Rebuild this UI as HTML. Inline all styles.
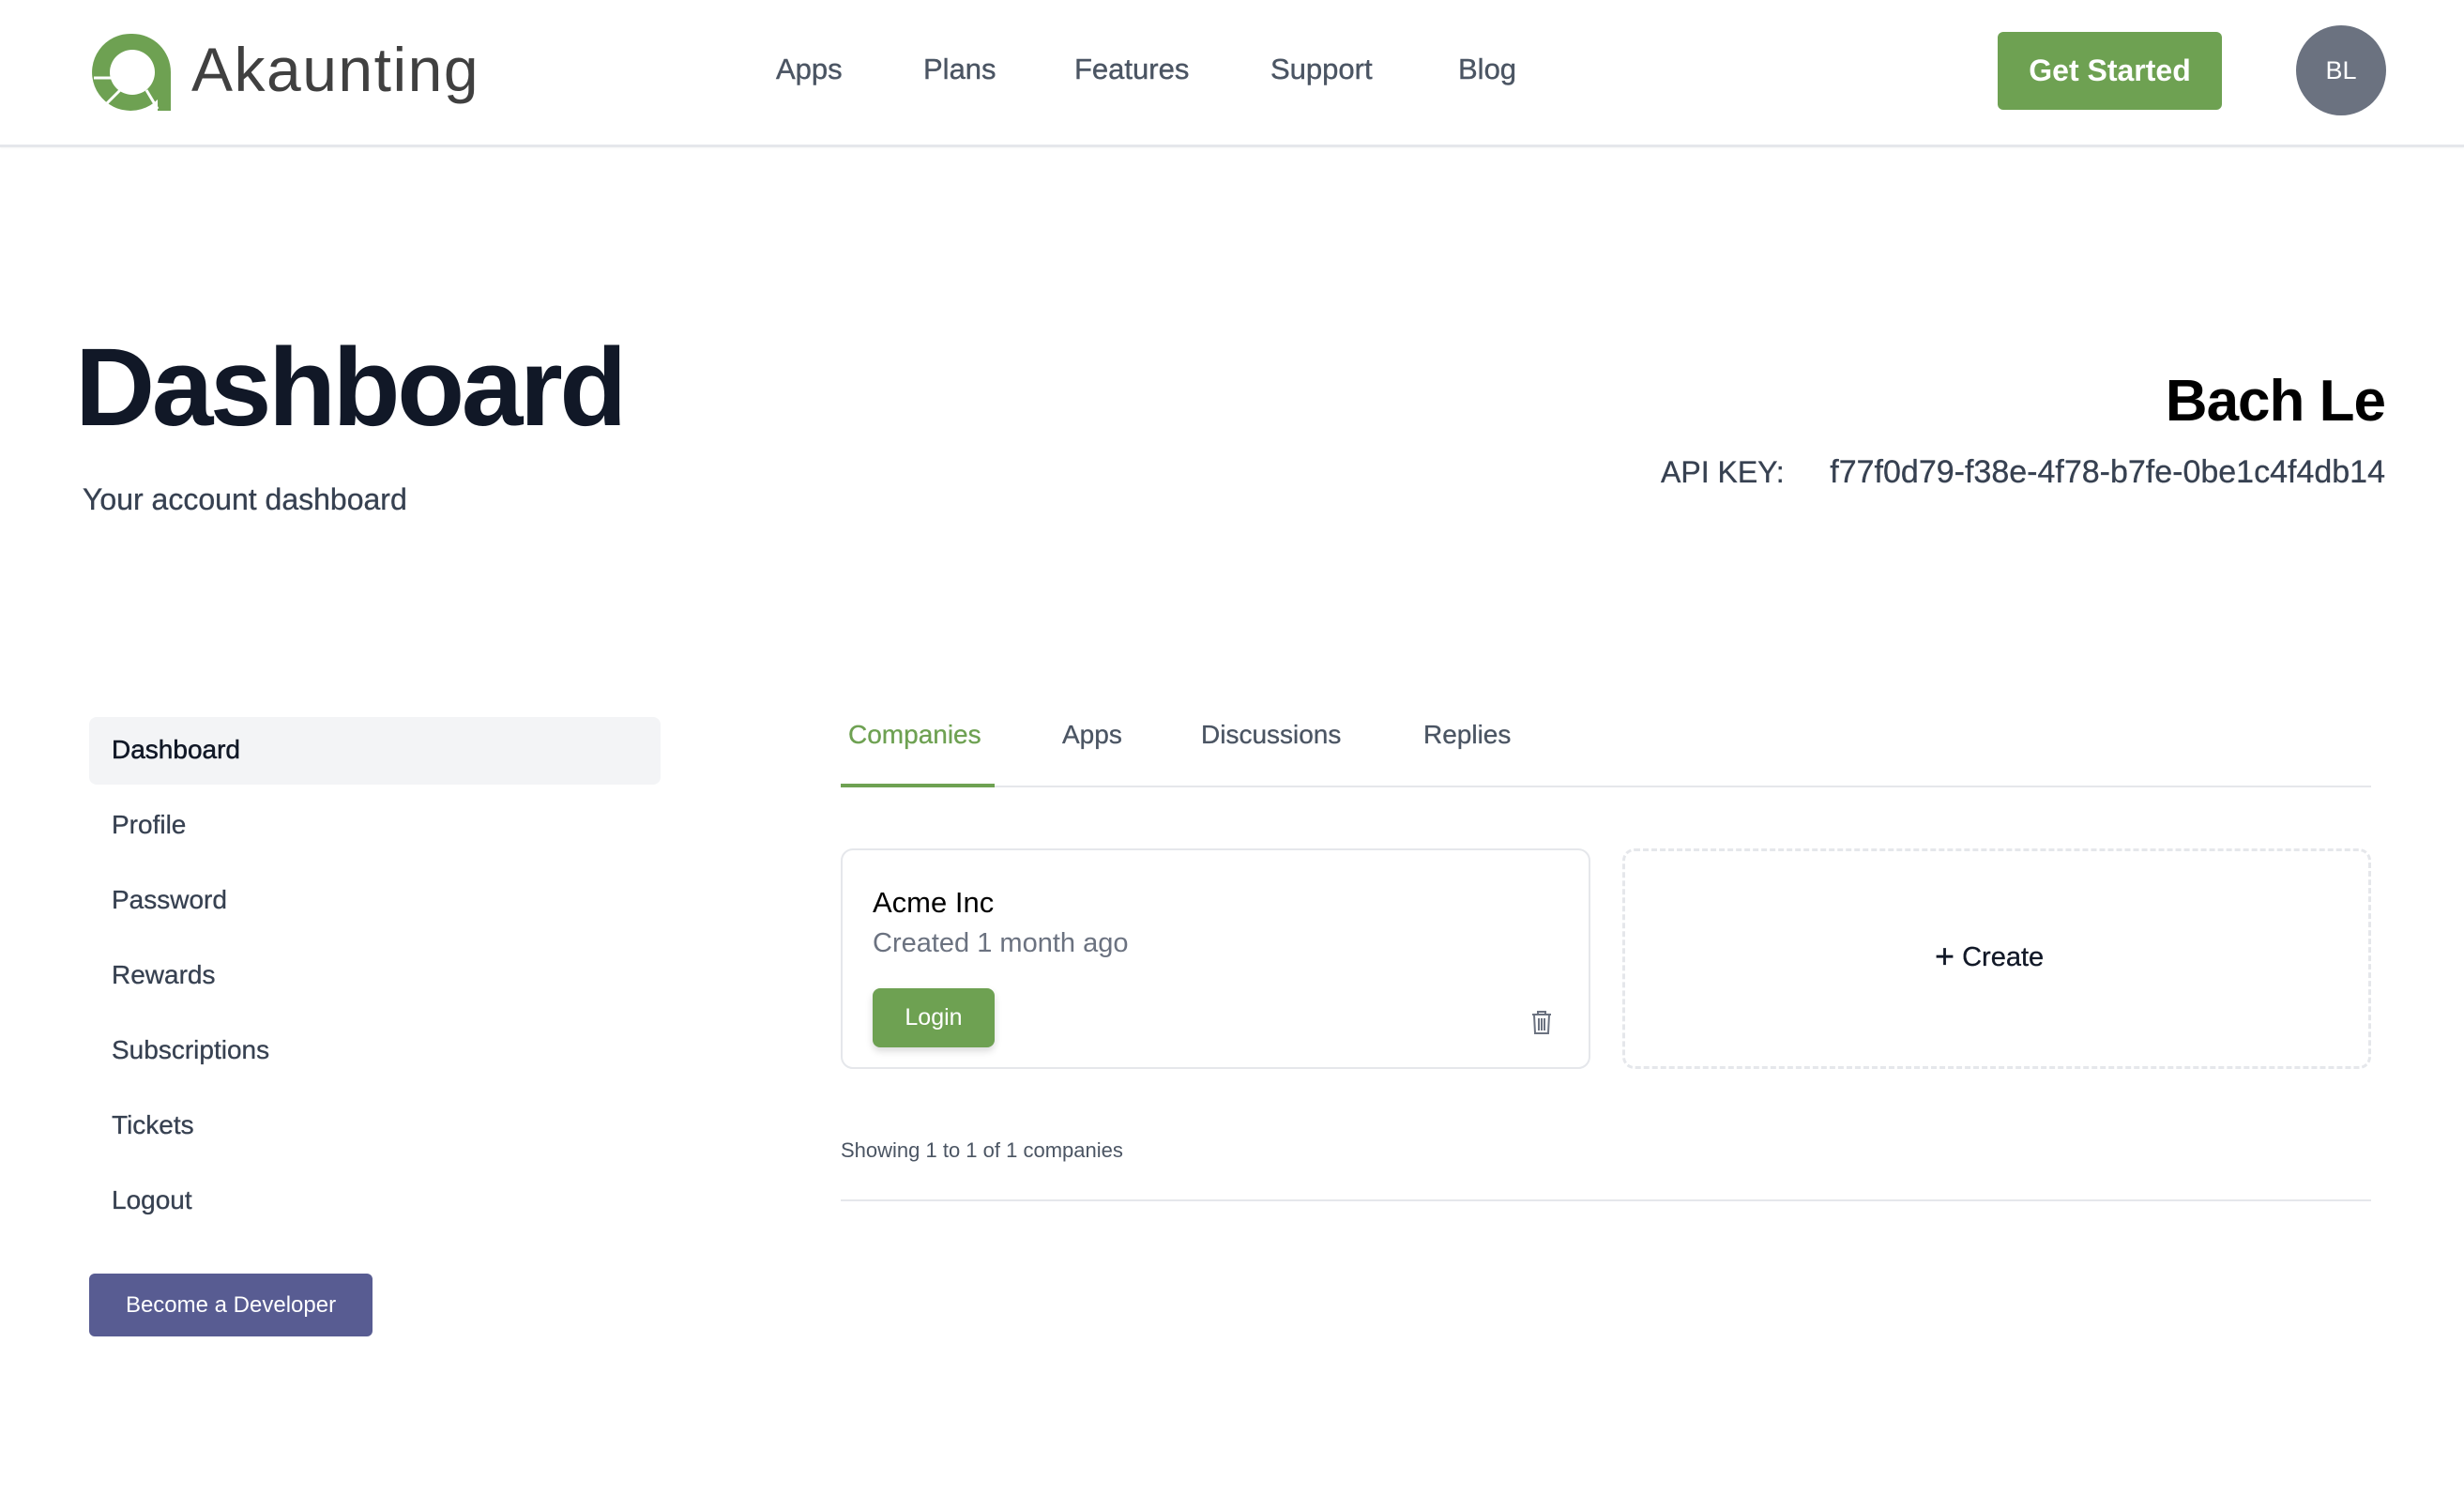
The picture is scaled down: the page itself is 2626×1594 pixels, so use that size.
<!DOCTYPE html>
<html><head><meta charset="utf-8"><style>
*{box-sizing:border-box;margin:0;padding:0}
body{width:2626px;height:1594px;background:#fff;font-family:"Liberation Sans",sans-serif;position:relative;overflow:hidden}
.a{position:absolute;white-space:nowrap}
.hdr{position:absolute;left:0;top:0;width:2626px;height:157px;border-bottom:3px solid #e5e7eb;box-shadow:0 1px 3px rgba(0,0,0,.04)}
.nav{font-size:31px;color:#4b5563;top:56px;-webkit-text-stroke:0.4px #4b5563}
.side{font-size:28px;color:#374151;left:119px;-webkit-text-stroke:0.3px #374151}
.tab{font-size:28px;color:#4b5563;top:767px;-webkit-text-stroke:0.3px #4b5563}
</style></head><body>
<div class="hdr"></div>
<svg class="a" style="left:98px;top:34px" width="86" height="86" viewBox="0 0 86 86">
<path d="M43 2 A41 41 0 0 1 84 43 L84 84 L70 84 L70 72 A41 41 0 1 1 43 2 Z M43 19 A24 24 0 1 0 43 67 A24 24 0 1 0 43 19 Z" fill="#6ea152" fill-rule="evenodd"/>
<line x1="2" y1="49" x2="21" y2="49" stroke="#fff" stroke-width="3"/>
<line x1="16" y1="76" x2="30" y2="62" stroke="#fff" stroke-width="3"/>
<line x1="58" y1="62" x2="70" y2="82" stroke="#fff" stroke-width="3"/>
</svg>
<div class="a" style="left:204px;top:36px;font-size:66px;color:#404040;letter-spacing:1.5px">Akaunting</div>
<div class="a nav" style="left:827px">Apps</div>
<div class="a nav" style="left:984px">Plans</div>
<div class="a nav" style="left:1145px">Features</div>
<div class="a nav" style="left:1354px">Support</div>
<div class="a nav" style="left:1554px">Blog</div>
<div class="a" style="left:2129px;top:34px;width:239px;height:83px;background:#6ea152;border-radius:6px;color:#fff;font-size:32px;font-weight:bold;text-align:center;line-height:83px">Get Started</div>
<div class="a" style="left:2447px;top:27px;width:96px;height:96px;border-radius:50%;background:#6b7280;color:#fff;font-size:27px;text-align:center;line-height:96px">BL</div>

<div class="a" style="left:80px;top:345px;font-size:118px;font-weight:bold;color:#111827;letter-spacing:-3.5px">Dashboard</div>
<div class="a" style="left:88px;top:514px;font-size:32px;color:#374151;-webkit-text-stroke:0.3px #374151">Your account dashboard</div>
<div class="a" style="right:84px;top:392px;font-size:62px;font-weight:bold;color:#000;letter-spacing:-1px">Bach Le</div>
<div class="a" style="left:1770px;top:485px;font-size:32px;color:#374151;-webkit-text-stroke:0.3px #374151">API KEY:</div>
<div class="a" style="right:84px;top:484px;font-size:34px;color:#374151;-webkit-text-stroke:0.3px #374151">f77f0d79-f38e-4f78-b7fe-0be1c4f4db14</div>

<div class="a" style="left:95px;top:764px;width:609px;height:72px;background:#f3f4f6;border-radius:8px"></div>
<div class="a side" style="top:783px;color:#111827;-webkit-text-stroke:0.5px #111827">Dashboard</div>
<div class="a side" style="top:863px">Profile</div>
<div class="a side" style="top:943px">Password</div>
<div class="a side" style="top:1023px">Rewards</div>
<div class="a side" style="top:1103px">Subscriptions</div>
<div class="a side" style="top:1183px">Tickets</div>
<div class="a side" style="top:1263px">Logout</div>
<div class="a" style="left:95px;top:1357px;width:302px;height:67px;background:#585c92;border-radius:6px;color:#fff;font-size:24px;text-align:center;line-height:67px">Become a Developer</div>

<div class="a tab" style="left:904px;color:#6ea152;-webkit-text-stroke:0.3px #6ea152">Companies</div>
<div class="a tab" style="left:1132px">Apps</div>
<div class="a tab" style="left:1280px">Discussions</div>
<div class="a tab" style="left:1517px">Replies</div>
<div class="a" style="left:896px;top:837px;width:1631px;height:2px;background:#e5e7eb"></div>
<div class="a" style="left:896px;top:835px;width:164px;height:4px;background:#6ea152"></div>

<div class="a" style="left:896px;top:904px;width:799px;height:235px;border:2px solid #e5e7eb;border-radius:13px"></div>
<div class="a" style="left:930px;top:944px;font-size:31px;color:#000">Acme Inc</div>
<div class="a" style="left:930px;top:989px;font-size:29px;color:#6b7280">Created 1 month ago</div>
<div class="a" style="left:930px;top:1053px;width:130px;height:63px;background:#6ea152;border-radius:8px;color:#fff;font-size:25px;text-align:center;line-height:63px;box-shadow:0 4px 8px rgba(0,0,0,.15)">Login</div>
<svg class="a" style="left:1632px;top:1076px" width="22" height="27" viewBox="0 0 22 27" fill="none" stroke="#6b7280" stroke-width="2">
<path d="M1 5h20M7 5V2h8v3M3 5l1 20h14l1-20M8 9v13M11 9v13M14 9v13"/></svg>

<div class="a" style="left:1729px;top:904px;width:798px;height:235px;border:3px dashed #e5e7eb;border-radius:13px"></div>
<div class="a" style="left:2062px;top:1004px;font-size:29px;color:#111827;-webkit-text-stroke:0.3px #111827"><span style="font-size:36px;line-height:29px;vertical-align:-2px">+</span> Create</div>

<div class="a" style="left:896px;top:1213px;font-size:22px;color:#4b5563">Showing 1 to 1 of 1 companies</div>
<div class="a" style="left:896px;top:1278px;width:1631px;height:2px;background:#e5e7eb"></div>
</body></html>
